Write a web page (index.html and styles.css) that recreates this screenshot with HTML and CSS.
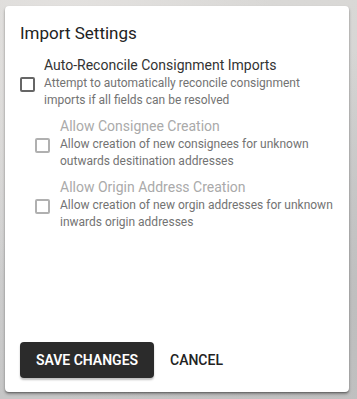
FILE: index.html
```html
<!DOCTYPE html>
<html>
<head>
<meta charset="utf-8">
<link rel="stylesheet" href="styles.css">
</head>
<body>
<div class="card">
  <h2 class="title">Import Settings</h2>
  <div class="options">
    <label class="option">
      <span class="box"></span>
      <span class="text">
        <span class="label">Auto-Reconcile Consignment Imports</span>
        <span class="desc">Attempt to automatically reconcile consignment imports if all fields can be resolved</span>
      </span>
    </label>
    <label class="option nested disabled">
      <span class="box"></span>
      <span class="text">
        <span class="label">Allow Consignee Creation</span>
        <span class="desc">Allow creation of new consignees for unknown outwards desitination addresses</span>
      </span>
    </label>
    <label class="option nested disabled">
      <span class="box"></span>
      <span class="text">
        <span class="label">Allow Origin Address Creation</span>
        <span class="desc">Allow creation of new orgin addresses for unknown inwards origin addresses</span>
      </span>
    </label>
  </div>
  <div class="actions">
    <button class="btn primary">Save Changes</button>
    <button class="btn text-btn">Cancel</button>
  </div>
</div>
</body>
</html>
```

FILE: styles.css
```css
* { box-sizing: border-box; }
html, body { height: 100%; }
body {
  margin: 0;
  padding: 6px 8px 7px 5px;
  font-family: Roboto, "Liberation Sans", sans-serif;
  background:
    radial-gradient(ellipse at 20% 10%, #e4e2e0 0%, rgba(228,226,224,0) 50%),
    radial-gradient(ellipse at 90% 80%, #bdbdbd 0%, rgba(189,189,189,0) 60%),
    linear-gradient(180deg, #d9d8d6 0%, #cfcfcf 60%, #c6c6c6 100%);
}
.card {
  height: 100%;
  background: #fff;
  border-radius: 4px;
  box-shadow: 0 2px 3px rgba(0,0,0,0.35), 0 1px 1px rgba(0,0,0,0.2);
  padding: 16px 16px 14px 15px;
  display: flex;
  flex-direction: column;
}
.title {
  margin: 0;
  font-size: 17px;
  font-weight: 400;
  line-height: 22px;
  color: #222;
}
.options {
  display: flex;
  flex-direction: column;
  gap: 8px;
  margin-top: 12px;
}
.option {
  display: flex;
  align-items: center;
  gap: 9px;
}
.option.nested { padding-left: 15px; gap: 10px; }
.box {
  flex: none;
  width: 15px;
  height: 15px;
  border: 2px solid #666;
  border-radius: 2px;
  margin-top: 4px;
}
.text { display: flex; flex-direction: column; }
.label {
  font-size: 14px;
  line-height: 19px;
  color: #333;
}
.desc {
  font-size: 12px;
  line-height: 17px;
  color: #737373;
}
.disabled .box { border-color: #b0b0b0; }
.disabled .label { color: #aaa; }
.actions {
  margin-top: auto;
  display: flex;
  align-items: center;
  gap: 8px;
}
.btn {
  font-family: Roboto, "Liberation Sans", sans-serif;
  font-size: 14px;
  text-transform: uppercase;
  border: 0;
  height: 36px;
  border-radius: 4px;
  background: none;
  padding: 0 8px;
}
.primary {
  background: #2b2b2b;
  color: #fff;
  font-weight: 600;
  width: 134px;
  padding: 0;
  box-shadow: 0 2px 2px rgba(0,0,0,0.25);
}
.text-btn {
  color: #222;
  font-weight: 500;
}
```
